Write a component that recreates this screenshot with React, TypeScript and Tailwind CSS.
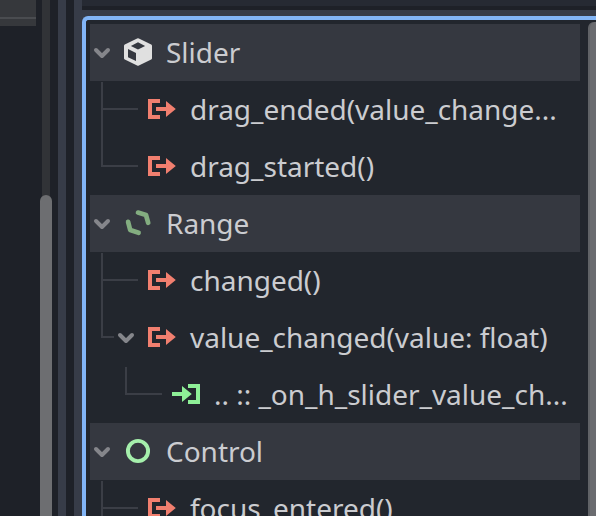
import React from "react";

function Chevron() {
  return (
    <svg width="24" height="57" viewBox="0 0 24 57" className="shrink-0">
      <path d="M6 26l6 6 6-6" fill="none" stroke="#85868b" strokeWidth="4" strokeLinecap="round" strokeLinejoin="round" />
    </svg>
  );
}

function CubeIcon() {
  return (
    <path
      fill="#e0e0e0"
      fillRule="evenodd"
      d="M15.1 2.4Q16 2 16.9 2.4L29.2 8.6Q30 9 30 9.9V22.2Q30 23.1 29.2 23.5L16.9 29.6Q16 30 15.1 29.6L2.8 23.5Q2 23.1 2 22.2V9.9Q2 9 2.8 8.6zM16 6.2L8.9 9.9 16 13.5l7.1-3.6zM6 13v8.2l8 3.8v-8z"
    />
  );
}

function RangeIcon() {
  return (
    <g fill="none" stroke="#83ad80" strokeWidth="4.7" strokeLinecap="round" strokeLinejoin="round">
      <path d="M16 5.6l8 2.4 2.2 7.8" />
      <path d="M6.1 14.8l2.1 8.2 8.4 2.8" />
    </g>
  );
}

function ControlIcon() {
  return <circle cx="16" cy="16" r="10.1" fill="none" stroke="#a5efac" strokeWidth="3.9" />;
}

function SignalIcon() {
  return <path fill="#f17f6f" d="M2 6h12v4H6v12h8v4H2zM10 14h10V8l9.8 8L20 24v-6H10z" />;
}

function SlotIcon() {
  return <path fill="#8eef97" d="M2 14h10V8l9.8 8L12 24v-6H2zM18 6h12v20H18v-4h8V10h-8z" />;
}

function Icon({ children }: { children: React.ReactNode }) {
  return (
    <svg width="32" height="32" viewBox="0 0 32 32" className="mt-3 shrink-0">
      {children}
    </svg>
  );
}

function Label({ children }: { children: React.ReactNode }) {
  return (
    <span className="ml-3 whitespace-pre text-[28px] leading-[57px] tracking-[-0.02px] text-[#cbccd0]">{children}</span>
  );
}

function Group({ name, children }: { name: string; children: React.ReactNode }) {
  return (
    <div className="flex h-[57px] shrink-0 bg-[#353840]">
      <Chevron />
      <div className="ml-2 flex">
        <Icon>{children}</Icon>
      </div>
      <Label>{name}</Label>
    </div>
  );
}

function Guide({ first, last, short }: { first?: boolean; last?: boolean; short?: boolean }) {
  return (
    <div className={"flex shrink-0 flex-col " + (short ? "w-[13px]" : "w-[37px]") + (first ? " pt-px" : "")}>
      <div className={"border-b-2 border-l-2 border-[#3b3e46] " + (first ? "h-7" : "h-[29px]")} />
      {!last && <div className="flex-1 border-l-2 border-[#3b3e46]" />}
    </div>
  );
}

function Signal({ name, first, last, open }: { name: string; first?: boolean; last?: boolean; open?: boolean }) {
  return (
    <div className="flex h-[57px] shrink-0 pl-[11px]">
      <Guide first={first} last={last} short={open} />
      {open ? <Chevron /> : null}
      <div className="ml-2 flex">
        <Icon>
          <SignalIcon />
        </Icon>
      </div>
      <Label>{name}</Label>
    </div>
  );
}

export default function App() {
  return (
    <div
      className="flex h-[516px] w-[596px] overflow-hidden bg-[#1e2128]"
      style={{ fontFamily: '"Noto Sans", sans-serif' }}
    >
      <div className="flex w-[58px] shrink-0">
        <div className="h-[26px] w-9 shrink-0 bg-[#36383c]">
          <div className="h-[17px]" />
          <div className="h-0.5 bg-[#4a4c50]" />
        </div>
        <div className="ml-1 flex w-3 flex-col">
          <div className="-mb-1.5 ml-0.5 h-[201px] w-2 shrink-0 bg-[#313337]" />
          <div className="z-10 flex-1 rounded-t-md bg-[#6d6e71]" />
        </div>
      </div>
      <div className="w-2 shrink-0 bg-[#373c48]" />
      <div className="w-2 shrink-0" />
      <div className="w-2 shrink-0 bg-[#373c48]" />
      <div className="flex w-[514px] shrink-0 flex-col">
        <div className="h-1.5 shrink-0 bg-[#262a33]" />
        <div className="h-1 shrink-0" />
        <div className="h-1.5 shrink-0 bg-[#373c48]" />
        <div className="flex min-h-0 flex-1 bg-[#373c48]">
          <div className="flex min-h-0 flex-1 rounded-tl-md border-l-4 border-t-4 border-[#82b5f6] bg-[#22262d] pl-1 pt-1">
            <div className="flex w-[490px] shrink-0 flex-col overflow-hidden">
              <Group name="Slider">
                <CubeIcon />
              </Group>
              <Signal name="drag_ended(value_change..." first />
              <Signal name="drag_started()" last />
              <Group name="Range">
                <RangeIcon />
              </Group>
              <Signal name="changed()" first />
              <Signal name="value_changed(value: float)" last open />
              <div className="flex h-[57px] shrink-0 pl-[35px]">
                <Guide first last />
                <div className="ml-2 flex">
                  <Icon>
                    <SlotIcon />
                  </Icon>
                </div>
                <Label>.. :: _on_h_slider_value_ch...</Label>
              </div>
              <Group name="Control">
                <ControlIcon />
              </Group>
              <Signal name="focus_entered()" first />
            </div>
            <div className="-mt-0.5 ml-2 flex-1 rounded-tl-md border-l-2 border-[#606266] bg-[#6b6c70]" />
          </div>
        </div>
      </div>
    </div>
  );
}
